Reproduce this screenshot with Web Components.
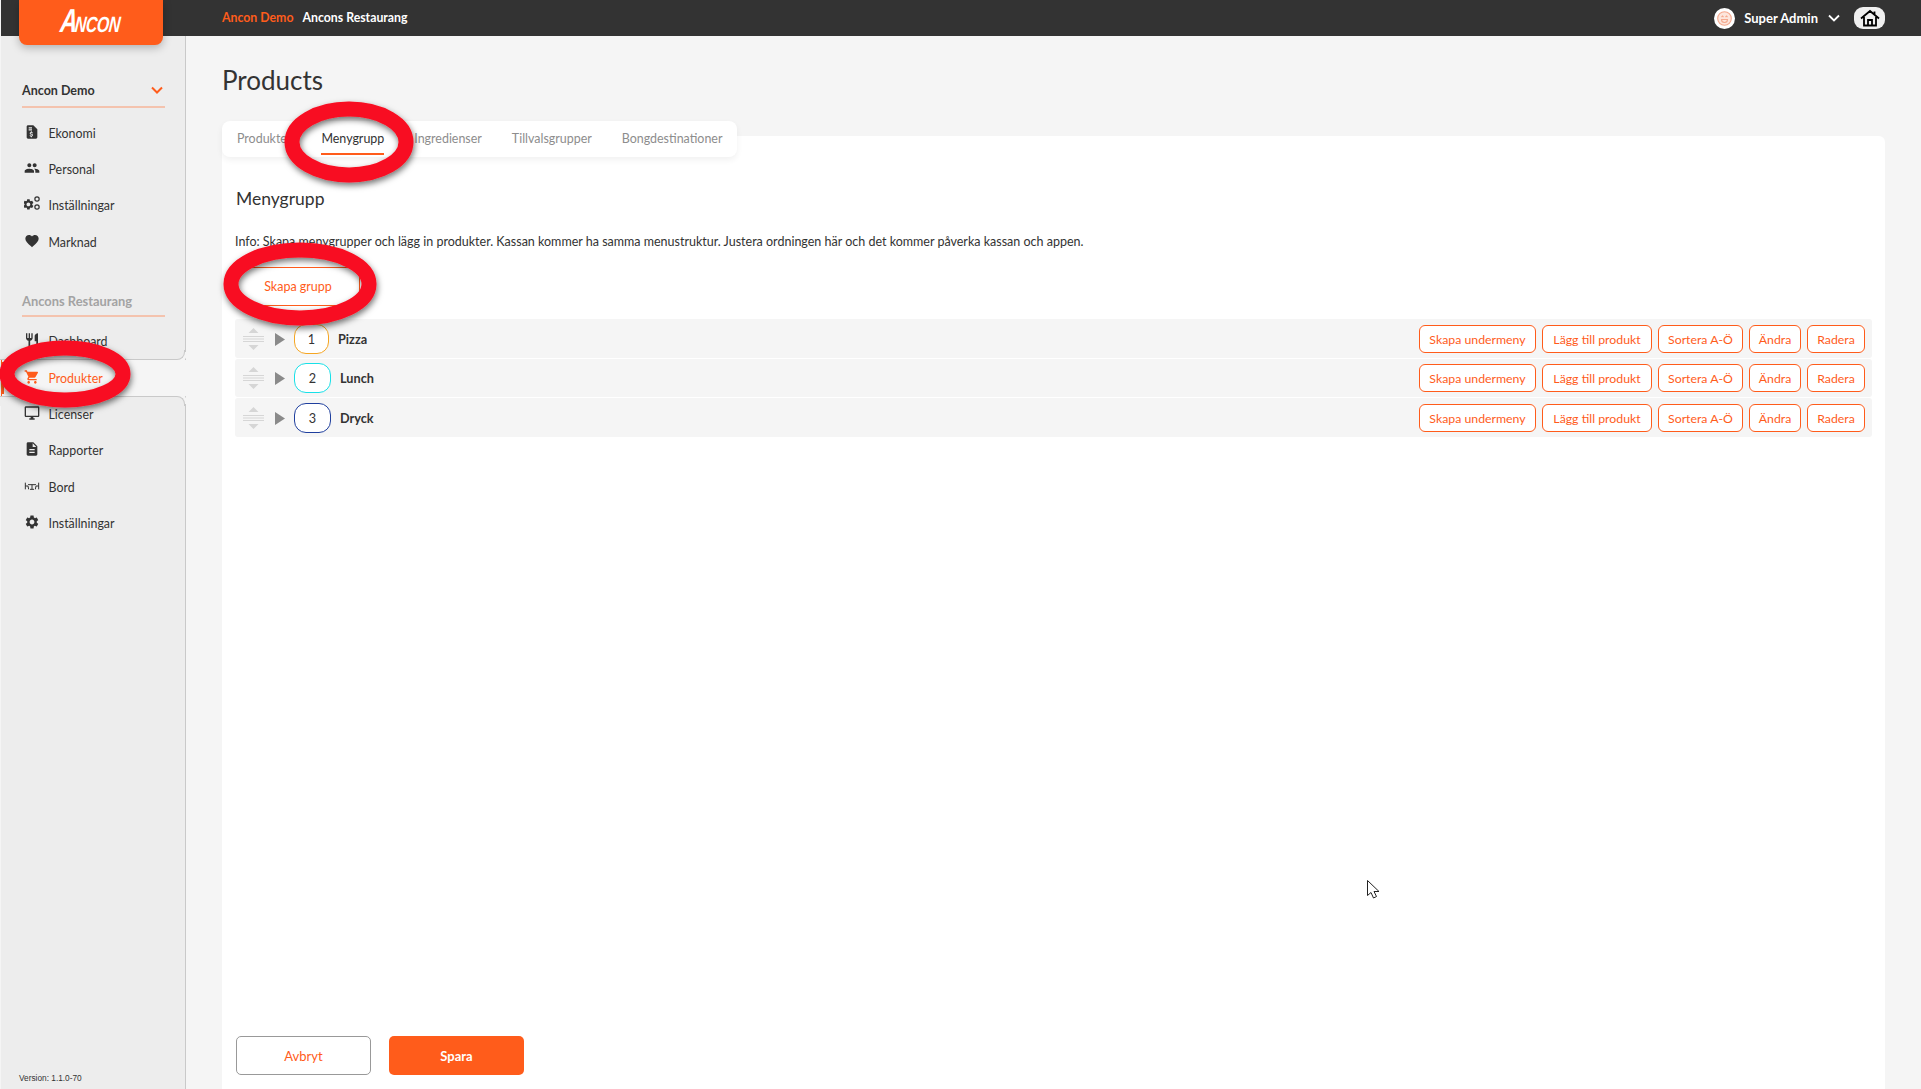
<!doctype html>
<html lang="sv">
<head>
<meta charset="utf-8">
<title>Products</title>
<style>
  html, body { margin: 0; height: 100%; }
  body {
    background: #f5f5f5;
    color: #333;
    font-family: Lato, "Noto Sans", sans-serif;
    overflow: hidden;
  }
  #app { display: grid; grid-template-columns: 186px 1fr; grid-template-rows: 36px 1053px; height: 1089px; }
  ancon-topbar { grid-column: 1 / 3; }
</style>
</head>
<body>
<div id="app">
  <ancon-topbar></ancon-topbar>
  <ancon-sidebar>
    <nav-group label="Ancon Demo" open>
      <nav-item icon="money">Ekonomi</nav-item>
      <nav-item icon="people">Personal</nav-item>
      <nav-item icon="gears">Inställningar</nav-item>
      <nav-item icon="heart">Marknad</nav-item>
    </nav-group>
    <nav-group label="Ancons Restaurang" muted>
      <nav-item icon="food">Dashboard</nav-item>
      <nav-item icon="cart" active>Produkter</nav-item>
      <nav-item icon="desktop">Licenser</nav-item>
      <nav-item icon="report">Rapporter</nav-item>
      <nav-item icon="table">Bord</nav-item>
      <nav-item icon="gear">Inställningar</nav-item>
    </nav-group>
  </ancon-sidebar>
  <products-page></products-page>
</div>
<red-marks></red-marks>

<script>
const ICONS = {
  money: `<path d="M14 2H6c-1.1 0-2 .9-2 2v16c0 1.1.9 2 2 2h12c1.1 0 2-.9 2-2V8l-6-6zM7 5h5v1.6H7V5zm0 3h5v1.6H7V8zm6 9.2c-.2 1-.9 1.5-1.2 1.6V20h-1.5v-1.2c-1-.2-1.800-.9-1.900-2h1.500c.1.5.5.8 1.100.8.700 0 1-.3 1-.7 0-.5-.3-.7-1.300-1-1.200-.3-2.100-.8-2.100-2 0-1 .8-1.700 1.700-1.900V11h1.500v1c1 .2 1.600 1 1.700 1.900h-1.500c-.1-.5-.4-.8-1-.8s-1 .3-1 .7c0 .4.4.6 1.300.9 1.300.4 2.300 1 2.200 2.400z" fill-rule="evenodd"/>`,
  people: `<path d="M16 11c1.660 0 2.990-1.340 2.990-3S17.660 5 16 5c-1.660 0-3 1.340-3 3s1.340 3 3 3zm-8 0c1.660 0 2.990-1.340 2.990-3S9.660 5 8 5C6.340 5 5 6.340 5 8s1.340 3 3 3zm0 2c-2.330 0-7 1.170-7 3.500V19h14v-2.500c0-2.330-4.670-3.500-7-3.500zm8 0c-.29 0-.62.02-.97.05 1.160.84 1.970 1.970 1.970 3.450V19h6v-2.500c0-2.330-4.670-3.500-7-3.500z"/>`,
  heart: `<path d="M12 21.350l-1.450-1.320C5.400 15.360 2 12.280 2 8.500 2 5.420 4.420 3 7.500 3c1.740 0 3.410.81 4.500 2.090C13.090 3.810 14.760 3 16.500 3 19.580 3 22 5.420 22 8.500c0 3.780-3.400 6.860-8.550 11.540L12 21.350z"/>`,
  food: `<path d="M11 9H9V2H7v7H5V2H3v7c0 2.120 1.660 3.840 3.750 3.970V22h2.500v-9.030C11.340 12.840 13 11.120 13 9V2h-2v7zm5-3v8h2.500v8H21V2c-2.760 0-5 2.240-5 4z"/>`,
  cart: `<path d="M7 18c-1.100 0-1.990.9-1.990 2S5.900 22 7 22s2-.9 2-2-.9-2-2-2zM1 2v2h2l3.600 7.590-1.350 2.450c-.16.28-.25.61-.25.96 0 1.100.9 2 2 2h12v-2H7.420c-.14 0-.25-.11-.25-.25l.03-.12.9-1.630h7.450c.75 0 1.410-.41 1.750-1.030l3.580-6.490c.08-.14.12-.31.12-.48 0-.55-.45-1-1-1H5.210l-.94-2H1zm16 16c-1.100 0-1.990.9-1.990 2s.89 2 1.990 2 2-.9 2-2-.9-2-2-2z"/>`,
  desktop: `<path d="M21 2H3c-1.100 0-2 .9-2 2v12c0 1.100.9 2 2 2h7v2H8v2h8v-2h-2v-2h7c1.100 0 2-.9 2-2V4c0-1.100-.9-2-2-2zm0 14H3V4h18v12z"/>`,
  report: `<path d="M14 2H6c-1.100 0-1.990.9-1.990 2L4 20c0 1.100.89 2 1.990 2H18c1.100 0 2-.9 2-2V8l-6-6zm2 16H8v-2h8v2zm0-4H8v-2h8v2zm-3-5V3.500L18.500 9H13z"/>`,
  table: `<path d="M2 7v10M22 7v10M2 12h4l1 5M22 12h-4l-1 5M6 10h12M12 10v7M9 17h6" fill="none" stroke="currentColor" stroke-width="1.500"/>`,
  gear: `<path d="M19.140 12.940c.04-.3.06-.61.06-.94 0-.32-.02-.64-.07-.94l2.030-1.580c.18-.14.23-.41.12-.61l-1.920-3.320c-.12-.22-.37-.29-.59-.22l-2.390.96c-.5-.38-1.030-.7-1.620-.94l-.36-2.540c-.04-.24-.24-.41-.48-.41h-3.840c-.24 0-.43.17-.47.41l-.36 2.540c-.59.24-1.130.57-1.620.94l-2.390-.96c-.22-.08-.47 0-.59.22L2.740 8.870c-.12.21-.08.47.12.61l2.030 1.580c-.05.3-.09.63-.09.94s.02.64.07.94l-2.030 1.580c-.18.14-.23.41-.12.61l1.920 3.320c.12.22.37.29.59.22l2.390-.96c.5.38 1.030.7 1.620.94l.36 2.540c.05.24.24.41.48.41h3.840c.24 0 .44-.17.47-.41l.36-2.540c.59-.24 1.130-.56 1.620-.94l2.390.96c.22.08.47 0 .59-.22l1.920-3.320c.12-.22.07-.47-.12-.61l-2.010-1.580zM12 15.600c-1.980 0-3.600-1.620-3.600-3.600s1.620-3.600 3.600-3.600 3.600 1.620 3.600 3.600-1.620 3.600-3.600 3.600z"/>`,
};
ICONS.gears = `<g transform="translate(-3 3) scale(.8)">${ICONS.gear}</g><g transform="translate(14 -1) scale(.46)" fill="none" stroke="currentColor" stroke-width="4"><circle cx="12" cy="12" r="7"/></g><g transform="translate(14 11) scale(.46)" fill="none" stroke="currentColor" stroke-width="4"><circle cx="12" cy="12" r="7"/></g>`;

class AnconTopbar extends HTMLElement {
  constructor() {
    super();
    this.attachShadow({ mode: "open" }).innerHTML = `
      <style>
        :host {
          display: flex; align-items: center; height: 36px; position: relative; z-index: 3;
          background: #333; margin-left: 1px; padding: 0 36px 0 18px;
          font-size: 12.300px; font-weight: 700; color: #fff;
        }
        .logo {
          align-self: flex-start; box-sizing: border-box; width: 144px; height: 45px; flex: none;
          display: flex; justify-content: center;
          background: #ff5c1b; border-radius: 0 0 8px 8px; box-shadow: 0 3px 8px rgba(0,0,0,.25);
        }
        .logo div {
          display: flex; align-items: baseline; margin-top: 6px; height: 30px;
          font: italic 700 22px/30px "Liberation Sans", sans-serif;
          transform: scaleX(.72) skewX(-8deg); letter-spacing: -.5px;
        }
        .logo b { font-size: 33px; margin-right: -3px; }
        .crumbs { display: flex; gap: 9px; margin-left: 59px; padding-bottom: 2px; }
        .crumbs span:first-child { color: #ff5c1b; }
        .user { display: flex; align-items: center; margin-left: auto; font-size: 13px; }
        .face { width: 21px; height: 21px; border-radius: 50%; background: #fff; display: flex; margin-right: 9px; }
        .home { display: flex; justify-content: center; align-items: center; width: 31px; height: 22px; background: #f0f0f0; border-radius: 9px; margin-left: 14px; }
      </style>
      <div class="logo"><div><b>A</b>NCON</div></div>
      <div class="crumbs"><span>Ancon Demo</span><span>Ancons Restaurang</span></div>
      <div class="user">
        <span class="face">
          <svg width="21" height="21" viewBox="0 0 21 21" fill="none" stroke="#f5a98e" stroke-width="1.100">
            <circle cx="10.500" cy="10.500" r="6.800" fill="#fde6dc"/>
            <path d="M7.500 9l1-1 1 1M11.500 9l1-1 1 1M7.500 11.500h6c0 2-1.500 3-3 3s-3-1-3-3z"/>
          </svg>
        </span>
        <span>Super Admin</span>
        <svg style="margin-left:10px" width="12" height="8" viewBox="0 0 12 8" fill="none" stroke="#fff" stroke-width="1.800"><path d="M1 1.500l5 5 5-5"/></svg>
        <span class="home">
          <svg width="20" height="18" viewBox="0 0 20 18" fill="none" stroke="#000" stroke-width="1.800">
            <path d="M1 9.500L10 2l9 7.500M4 8v8.500h12V8M8 16.500V11h4v5.500M14.500 2.500v3"/>
          </svg>
        </span>
      </div>
    `;
  }
}

class AnconSidebar extends HTMLElement {
  constructor() {
    super();
    this.attachShadow({ mode: "open" }).innerHTML = `
      <style>
        :host {
          display: flex; flex-direction: column; gap: 27px; box-sizing: border-box;
          margin-left: 1px; padding-top: 43px; background: #ededed;
          border-right: 1px solid #c9c9c9; position: relative;
        }
        .version { margin: auto 0 6px 18px; font: 8.300px "Liberation Sans", sans-serif; color: #333; }
      </style>
      <slot></slot>
      <div class="version">Version: 1.1.0-70</div>
    `;
  }
}

class NavGroup extends HTMLElement {
  constructor() {
    super();
    const muted = this.hasAttribute("muted");
    this.attachShadow({ mode: "open" }).innerHTML = `
      <style>
        :host { display: block; }
        .head {
          display: flex; justify-content: space-between; align-items: center;
          height: 22px; margin: 0 20px 0 21px; padding: ${muted ? "2px 0 3px" : "0 0 5px"};
          border-bottom: 2px solid #f4c3ae;
          font-size: ${muted ? "12.900px" : "12.500px"}; font-weight: 700; color: ${muted ? "#a3a3a3" : "#333"};
        }
        .head svg { margin-right: 2px; }
        .items { display: flex; flex-direction: column; padding-top: 7px; }
      </style>
      <div class="head">
        <span>${this.getAttribute("label")}</span>
        ${this.hasAttribute("open") ? `<svg width="12" height="8" viewBox="0 0 12 8" fill="none" stroke="#ff5c1b" stroke-width="2"><path d="M1 1.500l5 5 5-5"/></svg>` : ""}
      </div>
      <div class="items"><slot></slot></div>
    `;
  }
}

class NavItem extends HTMLElement {
  constructor() {
    super();
    const active = this.hasAttribute("active");
    this.attachShadow({ mode: "open" }).innerHTML = `
      <style>
        :host {
          display: flex; align-items: center; height: 36.400px; padding-left: 23px; gap: 8.500px;
          font-size: 12.400px; color: ${active ? "#ff5c1b" : "#333"}; position: relative;
          ${active ? "background: #f5f5f5; margin-right: -1px; box-shadow: inset 3px 0 0 #ff5c1b;" : ""}
        }
        svg { flex: none; fill: currentColor; margin-bottom: 3px; }
        ${active ? `
        :host::before, :host::after {
          content: ""; position: absolute; right: 1px; width: 100%; height: 10px; box-sizing: border-box;
          background: #ededed; border-right: 1px solid #c9c9c9;
        }
        :host::before { top: -10px; border-bottom: 1px solid #c9c9c9; border-bottom-right-radius: 8px; box-shadow: 2px 2px 0 #f5f5f5; }
        :host::after { bottom: -10px; border-top: 1px solid #c9c9c9; border-top-right-radius: 8px; box-shadow: 2px -2px 0 #f5f5f5; }` : ""}
      </style>
      <svg width="16" height="16" viewBox="0 0 24 24">${ICONS[this.getAttribute("icon")]}</svg>
      <span style="position:relative;z-index:1"><slot></slot></span>
    `;
  }
}

class TabBar extends HTMLElement {
  constructor() {
    super();
    const tabs = ["Produkter", "Menygrupp", "Ingredienser", "Tillvalsgrupper", "Bongdestinationer"];
    this.attachShadow({ mode: "open" }).innerHTML = `
      <style>
        :host {
          display: inline-flex; align-self: flex-start; height: 36px; padding: 0 15px; gap: 30px;
          background: #fff; border-radius: 8px; box-shadow: 0 3px 6px rgba(0,0,0,.06);
          position: relative; z-index: 1; margin-bottom: -21px;
          font-size: 12.450px; color: #8d8d8d;
        }
        span { display: flex; align-items: center; box-sizing: border-box; height: 33px; margin-top: 1px; }
        .on { color: #333; border-bottom: 2px solid #ff5c1b; padding-top: 2px; }
      </style>
      ${tabs.map((t, i) => `<span class="${i === 1 ? "on" : ""}">${t}</span>`).join("")}
    `;
  }
}

class OutlineButton extends HTMLElement {
  constructor() {
    super();
    this.attachShadow({ mode: "open" }).innerHTML = `
      <style>
        :host {
          display: inline-flex; align-items: center; justify-content: center; box-sizing: border-box;
          height: 28px; padding: 0 4px; border: 1px solid #ff5c1b; border-radius: 6px;
          background: #fff; color: #ff5c1b; font-size: 12.300px; font-weight: 400; white-space: nowrap;
        }
      </style>
      <slot></slot>
    `;
  }
}

class MenuRow extends HTMLElement {
  constructor() {
    super();
    const actions = ["Skapa undermeny", "Lägg till produkt", "Sortera A-Ö", "Ändra", "Radera"];
    this.attachShadow({ mode: "open" }).innerHTML = `
      <style>
        :host {
          display: flex; align-items: center; height: ${this.getAttribute("h")}px; padding: ${this.getAttribute("h") === "39" ? "1px" : "0"} 7px 0 8px; box-sizing: border-box;
          background: #f5f5f5; border-radius: 3px; font-size: 12.700px; font-weight: 700; color: #333;
        }
        .num {
          box-sizing: border-box; width: ${this.getAttribute("w")}px; height: 30px; margin: 0 9px 0 9px;
          display: flex; align-items: center; justify-content: center;
          border: 1px solid ${this.getAttribute("color")}; border-radius: 12px; background: #fff; font-weight: 400;
        }
        .actions { display: flex; gap: 6px; margin-left: auto; }
        outline-button:nth-child(1) { width: 117px; }
        outline-button:nth-child(2) { width: 110px; }
        outline-button:nth-child(3) { width: 85px; }
        outline-button:nth-child(4) { width: 52px; }
        outline-button:nth-child(5) { width: 58px; }
        svg { flex: none; }
      </style>
      <svg width="21" height="24" viewBox="0 0 21 24" fill="#d6d6d6">
        <path d="M10.500 1l5 5h-10zM10.500 23l5-5h-10z"/>
        <path d="M0 9h21v1H0zM0 11.500h21v1H0zM0 14h21v1H0z"/>
      </svg>
      <svg style="margin-left:11px" width="10" height="13" viewBox="0 0 10 13" fill="#8a8a8a"><path d="M0 0l10 6.500L0 13z"/></svg>
      <span class="num">${this.getAttribute("num")}</span>
      <span>${this.getAttribute("name")}</span>
      <div class="actions">${actions.map((a) => `<outline-button>${a}</outline-button>`).join("")}</div>
    `;
  }
}

class ProductsPage extends HTMLElement {
  constructor() {
    super();
    this.attachShadow({ mode: "open" }).innerHTML = `
      <style>
        :host { display: flex; flex-direction: column; padding: 0 36px; min-height: 0; }
        h1 { margin: 27px 0 24px; height: 34px; font-size: 26px; line-height: 34px; font-weight: 400; color: #333; }
        .card { flex: 1; display: flex; flex-direction: column; background: #fff; border-radius: 6px 6px 0 0; padding: 52px 13px 14px 13px; }
        h2 { margin: 0 0 23px 1px; font-size: 17.500px; line-height: 22px; font-weight: 400; }
        p { margin: 0 0 17px; font-size: 12.500px; line-height: 17px; color: #333; }
        .create {
          align-self: flex-start; box-sizing: border-box; width: 124px; height: 39px; margin: 0 0 13px 1px;
          display: flex; align-items: center; justify-content: center;
          border: 1px solid #ff5c1b; background: #fff; color: #ff5c1b; font-size: 12.500px;
        }
        .rows { display: flex; flex-direction: column; gap: 1px; }
        .foot { display: flex; gap: 18px; margin: auto 0 0 1px; }
        .foot span {
          box-sizing: border-box; width: 135px; height: 39px; border-radius: 5px;
          display: flex; align-items: center; justify-content: center; font-size: 13px;
        }
        .cancel { border: 1px solid #999; color: #ff5c1b; }
        .save { background: #ff5c1b; color: #fff; font-weight: 700; }
      </style>
      <h1>Products</h1>
      <tab-bar></tab-bar>
      <div class="card">
        <h2>Menygrupp</h2>
        <p>Info: Skapa menygrupper och lägg in produkter. Kassan kommer ha samma menustruktur. Justera ordningen här och det kommer påverka kassan och appen.</p>
        <div class="create">Skapa grupp</div>
        <div class="rows">
          <menu-row num="1" name="Pizza" color="#f5a623" w="35" h="39"></menu-row>
          <menu-row num="2" name="Lunch" color="#18e0e8" w="37" h="38"></menu-row>
          <menu-row num="3" name="Dryck" color="#1f3f9e" w="37" h="39"></menu-row>
        </div>
        <div class="foot"><span class="cancel">Avbryt</span><span class="save">Spara</span></div>
      </div>
    `;
  }
}

// red rings and the mouse pointer sit on top of the screenshot, free canvas
class RedMarks extends HTMLElement {
  constructor() {
    super();
    this.attachShadow({ mode: "open" }).innerHTML = `
      <style>
        :host { position: absolute; left: 0; top: 0; width: 1921px; height: 1089px; z-index: 9; pointer-events: none; }
      </style>
      <svg width="1921" height="1089" viewBox="0 0 1921 1089">
        <defs><filter id="s" x="-20%" y="-30%" width="140%" height="160%"><feDropShadow dx="1" dy="3" stdDeviation="3" flood-color="#000" flood-opacity=".55"/></filter></defs>
        <g fill="none" stroke="#f80d20" stroke-width="15" filter="url(#s)">
          <ellipse cx="349" cy="142" rx="57" ry="33"/>
          <ellipse cx="300" cy="284" rx="69" ry="34"/>
          <ellipse cx="65" cy="374" rx="58" ry="26"/>
        </g>
        <path d="M1367.500 880.500v15l3.500-3 2.500 5.500 3-1.500-2.500-5h5z" fill="#fff" stroke="#222" stroke-width="1"/>
      </svg>
    `;
  }
}

customElements.define("ancon-topbar", AnconTopbar);
customElements.define("ancon-sidebar", AnconSidebar);
customElements.define("nav-group", NavGroup);
customElements.define("nav-item", NavItem);
customElements.define("tab-bar", TabBar);
customElements.define("outline-button", OutlineButton);
customElements.define("menu-row", MenuRow);
customElements.define("products-page", ProductsPage);
customElements.define("red-marks", RedMarks);
</script>
</body>
</html>
